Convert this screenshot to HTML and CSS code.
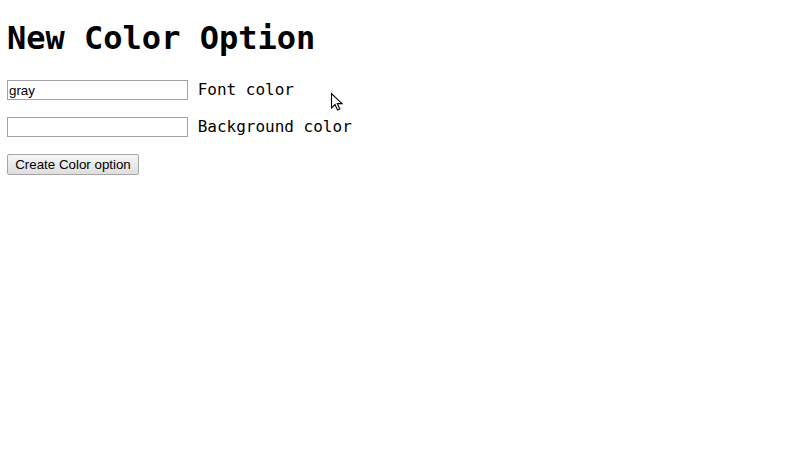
FILE: index.html
```html
<!DOCTYPE html>
<html>
<head>
<meta charset="utf-8">
<link rel="stylesheet" href="styles.css">
</head>
<body>
<h1 class="title">New Color Option</h1>
<form class="form">
  <p class="row"><input class="field" type="text" value="gray"> Font color</p>
  <p class="row"><input class="field" type="text" value=""> Background color</p>
  <p class="row"><button class="btn" type="button">Create Color option</button></p>
</form>
<svg class="cursor" width="14" height="20" viewBox="0 0 14 20">
  <path d="M1.5 1.5 L1.5 16 L5 12.5 L7.5 18 L9.8 17 L7.3 11.6 L12 11.6 Z" fill="#fff" stroke="#000" stroke-width="1.1" stroke-linejoin="miter"/>
</svg>
</body>
</html>
```
FILE: styles.css
```css
body {
  margin: 0 7px;
  padding-top: 1px;
  background: #fff;
  font-family: "DejaVu Sans Mono", monospace;
  font-size: 16px;
  color: #000;
}
.title {
  font-size: 32px;
  font-weight: bold;
  margin: 18.44px 0 21.44px;
}
.form {
  margin: 0;
}
.row {
  margin: 0 0 16px 0;
  line-height: 21px;
  height: 21px;
}
.field {
  box-sizing: border-box;
  width: 181px;
  height: 20px;
  border: 1px solid #a3a3a3;
  padding: 1px 1px;
  font-family: "Liberation Sans", Arial, sans-serif;
  font-size: 13.33px;
  color: #000;
  background: #fff;
  margin: 0;
  border-radius: 0;
  outline: none;
}
.btn {
  box-sizing: border-box;
  height: 21px;
  width: 132px;
  padding: 0 6px;
  margin: 0;
  font-family: "Liberation Sans", Arial, sans-serif;
  font-size: 13.33px;
  color: #000;
  border: 1px solid #a6a6a6;
  border-radius: 2px;
  background: linear-gradient(#f6f6f6, #dedede);
}
.cursor {
  position: absolute;
  left: 330px;
  top: 92px;
}
```
